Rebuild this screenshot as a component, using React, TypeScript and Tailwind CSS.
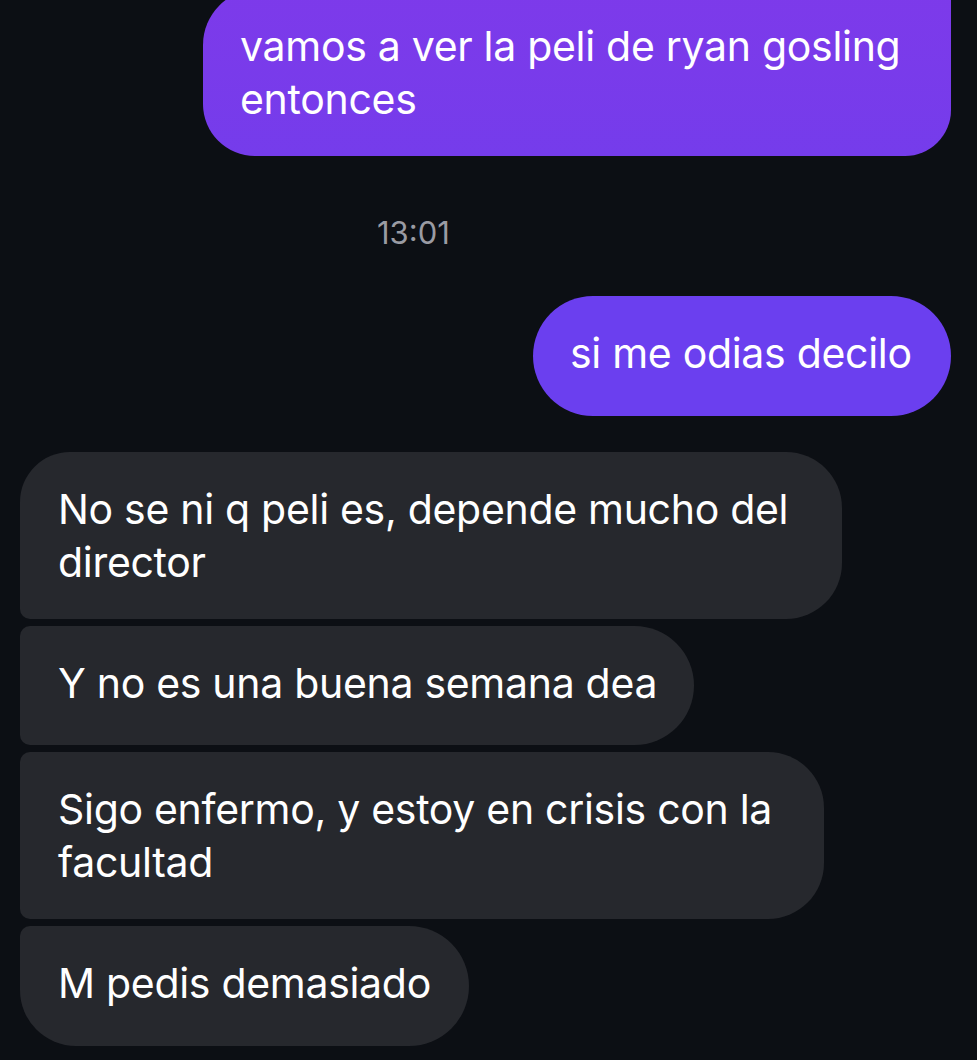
import React from "react";

export default function App() {
  return (
    <div className="w-[977px] h-[1060px] overflow-hidden bg-[#0c0f14] text-white font-['Inter','Noto_Sans',sans-serif] text-[41px] leading-[53px] tracking-[-0.3px]">
      <div className="flex flex-col">
        {/* sent group */}
        <div className="flex justify-end pr-[26px] mt-[-11px]">
          <div className="w-[748px] min-h-[120px] pl-[37px] pt-[31px] pb-[30px] rounded-tl-[56px] rounded-tr-[10px] rounded-br-[46px] rounded-bl-[52px] bg-gradient-to-b from-[#7d3aea] to-[#753ceb]">
            <div className="whitespace-nowrap">vamos a ver la peli de ryan gosling</div>
            <div className="whitespace-nowrap">entonces</div>
          </div>
        </div>

        <div className="mt-[59px] pl-[377px] text-[31px] leading-[35px] text-[#9a9ba3] tracking-normal">
          13:01
        </div>

        <div className="flex justify-end pr-[26px] mt-[46px]">
          <div className="w-[418px] h-[120px] pl-[37px] pt-[31px] rounded-full bg-[#6b3fef]">
            <div className="whitespace-nowrap">si me odias decilo</div>
          </div>
        </div>

        {/* received group */}
        <div className="flex flex-col items-start gap-[7px] pl-[20px] mt-[36px]">
          <div className="w-[822px] min-h-[120px] pl-[38px] pt-[31px] pb-[30px] rounded-tl-[50px] rounded-bl-[10px] rounded-tr-[56px] rounded-br-[56px] bg-[#26282d]">
            <div className="whitespace-nowrap">No se ni q peli es, depende mucho del</div>
            <div className="whitespace-nowrap">director</div>
          </div>
          <div className="w-[674px] min-h-[119px] pl-[38px] pt-[31px] pb-[30px] rounded-tl-[10px] rounded-bl-[10px] rounded-tr-[60px] rounded-br-[60px] bg-[#26282d]">
            <div className="whitespace-nowrap">Y no es una buena semana dea</div>
          </div>
          <div className="w-[804px] min-h-[120px] pl-[38px] pt-[31px] pb-[30px] rounded-tl-[10px] rounded-bl-[10px] rounded-tr-[56px] rounded-br-[56px] bg-[#26282d]">
            <div className="whitespace-nowrap">Sigo enfermo, y estoy en crisis con la</div>
            <div className="whitespace-nowrap">facultad</div>
          </div>
          <div className="w-[449px] min-h-[120px] pl-[38px] pt-[31px] pb-[30px] rounded-tl-[10px] rounded-bl-[56px] rounded-tr-[60px] rounded-br-[60px] bg-[#26282d]">
            <div className="whitespace-nowrap">M pedis demasiado</div>
          </div>
        </div>
      </div>
    </div>
  );
}
